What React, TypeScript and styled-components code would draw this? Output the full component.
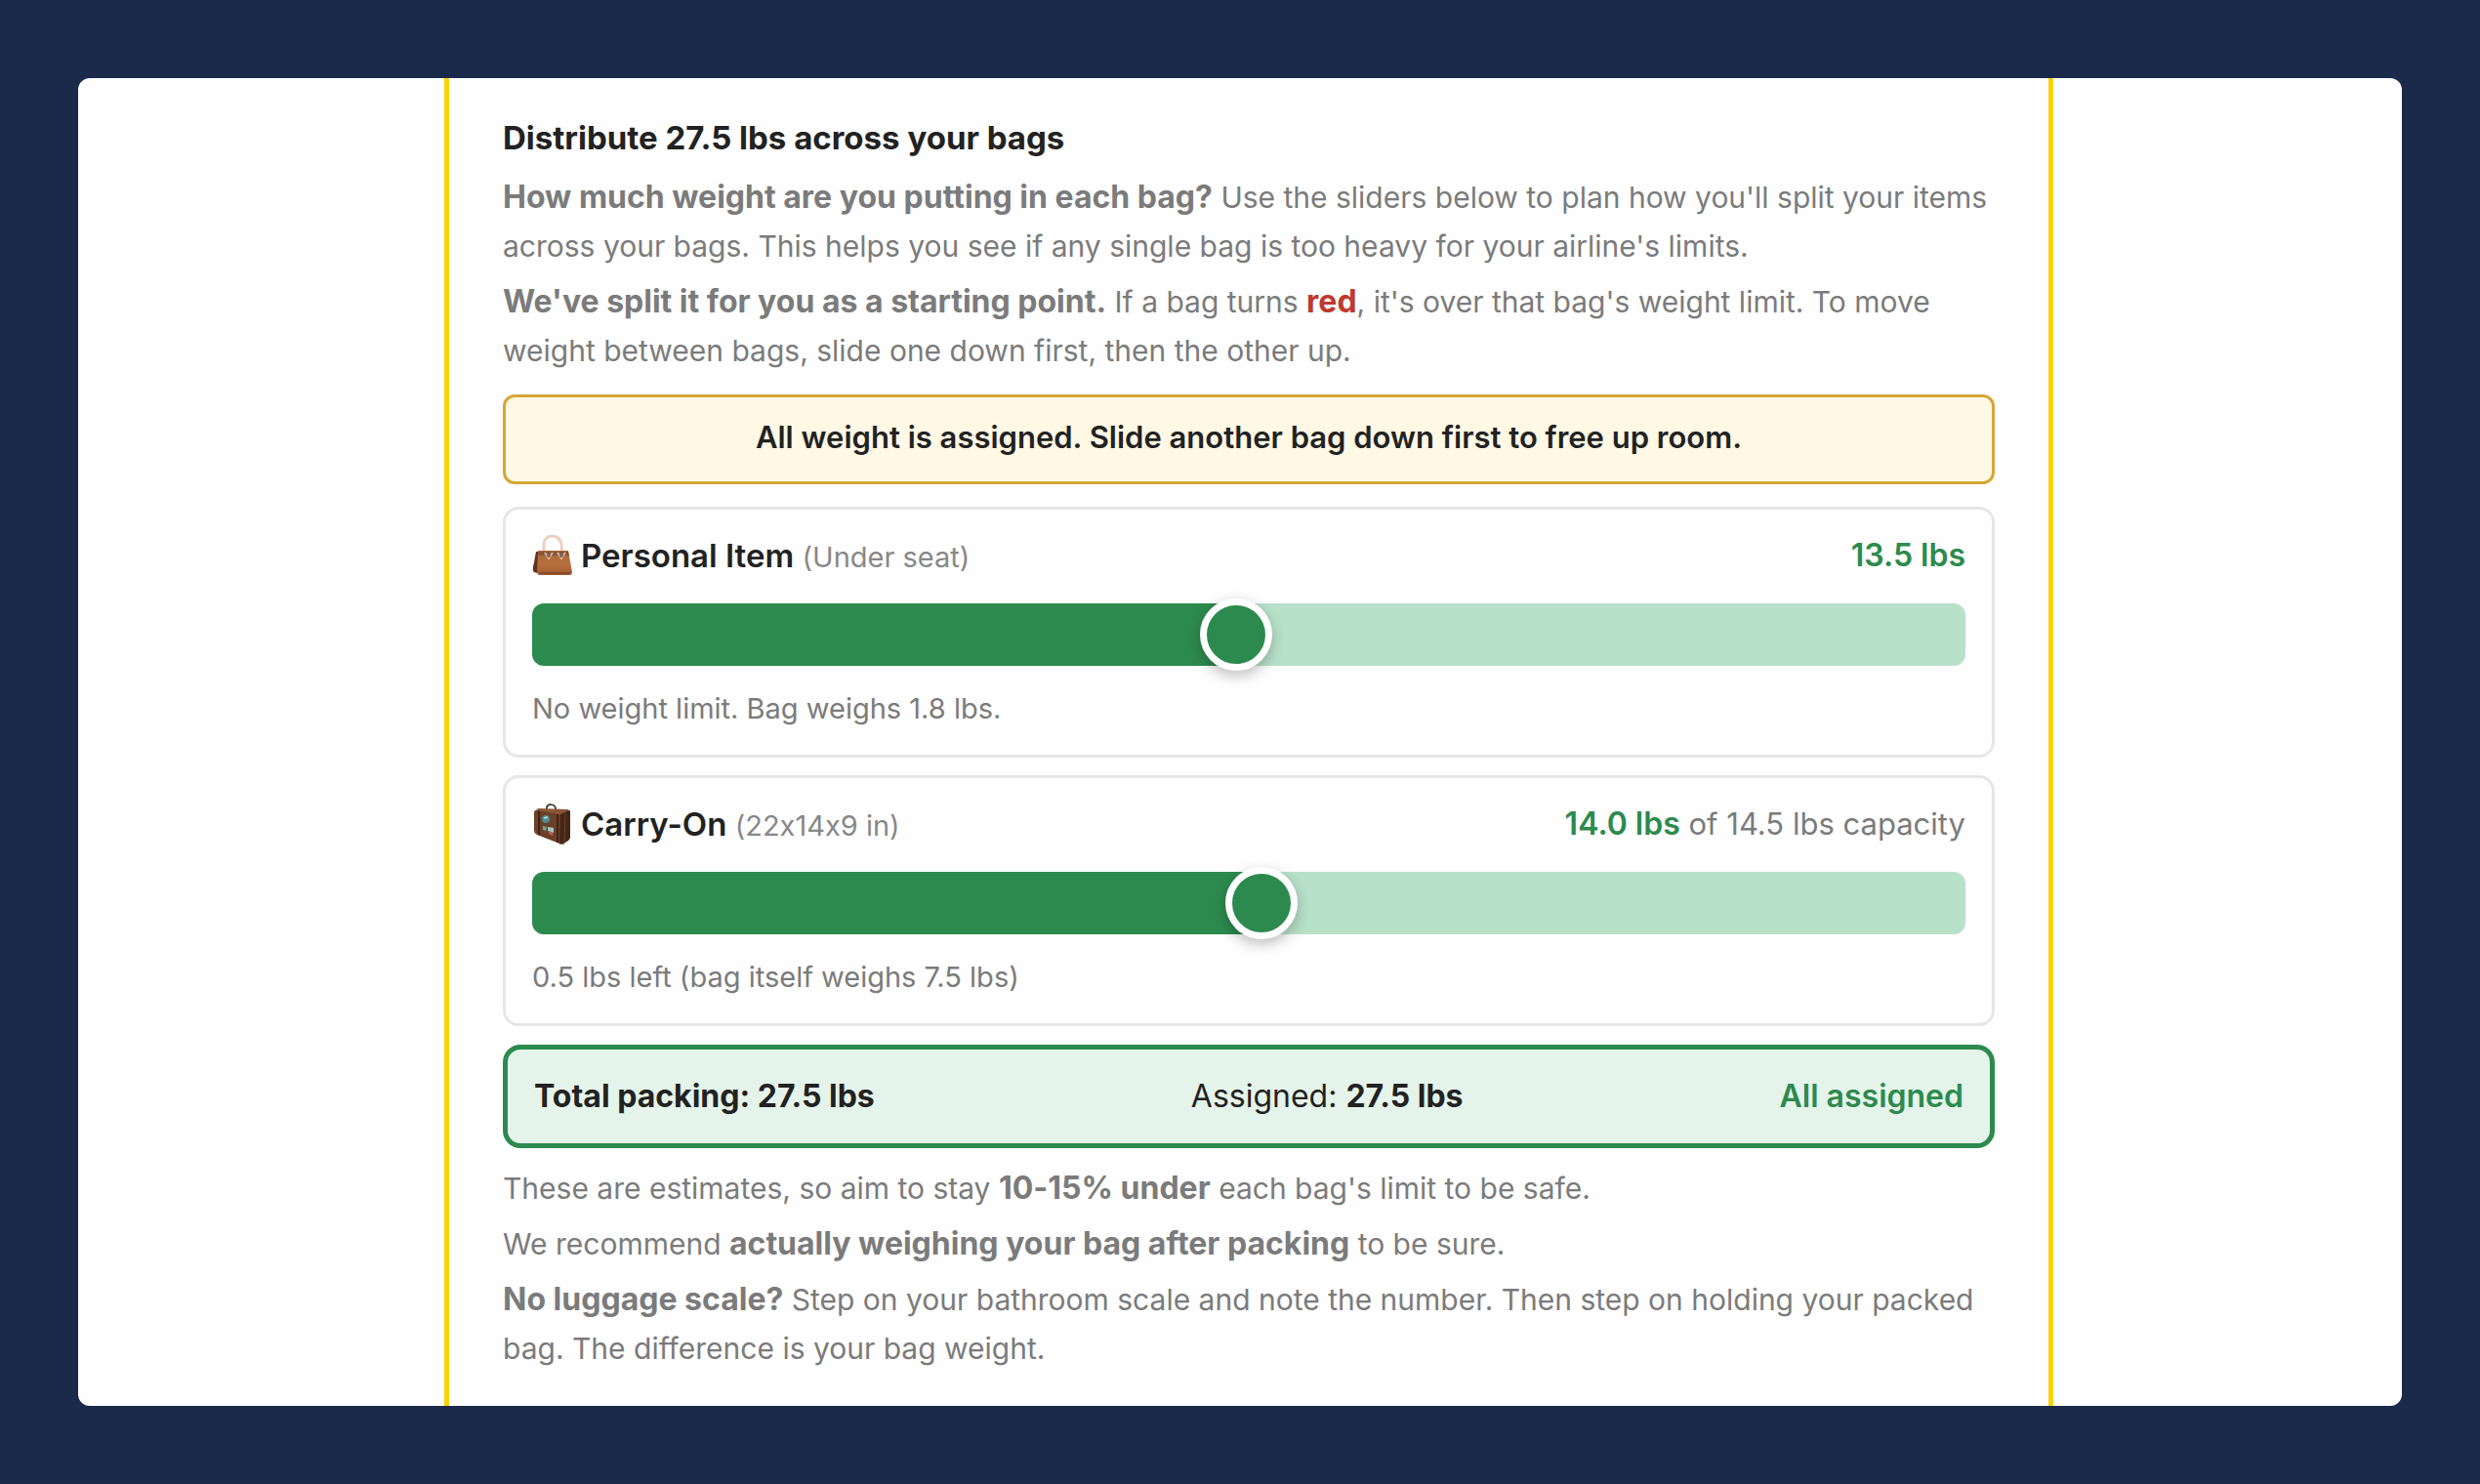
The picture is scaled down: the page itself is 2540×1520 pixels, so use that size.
import React, { useId, useState } from "react";
import styled, { createGlobalStyle } from "styled-components";

const GlobalStyle = createGlobalStyle`
  *, *::before, *::after { box-sizing: border-box; }
  body {
    margin: 0;
    background: #1b2a4a;
    color: #222;
    font-family: Inter, "Liberation Sans", sans-serif;
    font-feature-settings: "calt" 0;
  }
  h2, h3, p { margin: 0; }
`;

const Page = styled.div`
  display: flex;
  min-height: 100vh;
  padding: 80px;
`;

const Sheet = styled.main`
  display: flex;
  flex: 1;
  justify-content: center;
  padding-left: 18px;
  background: #fefefe;
  border-radius: 12px;
  overflow: hidden;
`;

const Column = styled.section`
  width: 100%;
  max-width: 1648px;
  padding: 36px 55px 0;
  border: solid #f9d108;
  border-width: 0 5px;
`;

const Heading = styled.h2`
  margin-bottom: 11px;
  font-size: 33px;
  font-weight: 700;
  line-height: 50px;
`;

const Copy = styled.div`
  display: grid;
  gap: 7px;
  color: #7b7b7b;
  font-size: 30px;
  line-height: 50px;
`;

const Strong = styled.strong`
  font-size: 32px;
  font-weight: 700;
  line-height: 1;
`;

const Red = styled(Strong)`
  color: #c0392b;
`;

const Notice = styled.p`
  margin: 20px 0 23px;
  padding: 16px 24px 20px;
  border: 3px solid #d6a737;
  border-radius: 12px;
  background: #fff8e5;
  font-size: 31px;
  font-weight: 600;
  line-height: 50px;
  text-align: center;
`;

const BagList = styled.div`
  display: grid;
  gap: 18px;
`;

const BagCard = styled.article`
  padding: 26px 27px 25px;
  border: 3px solid #e6e6e6;
  border-radius: 16px;
`;

const BagHeader = styled.div`
  display: flex;
  align-items: center;
  justify-content: space-between;
  margin-bottom: 28px;
  line-height: 42px;
`;

const BagTitle = styled.label`
  display: flex;
  align-items: center;
  gap: 8px;
  font-size: 33px;
  font-weight: 600;
`;

const BagSize = styled.span`
  color: #888;
  font-size: 29px;
  font-weight: 400;
  line-height: 1;
`;

const BagIcon = styled.svg`
  width: 42px;
  height: 42px;
`;

const BagValue = styled.output`
  color: #7b7b7b;
  font-size: 31px;
`;

const Green = styled.strong`
  color: #2d8a4e;
  font-size: 32px;
  font-weight: 600;
`;

const Slider = styled.input`
  display: block;
  width: 100%;
  height: 64px;
  margin: 0;
  appearance: none;
  background: transparent;
  cursor: pointer;

  &::-webkit-slider-runnable-track {
    height: 64px;
    border-radius: 12px;
    background: linear-gradient(
      to right,
      #2d8a4e var(--fill),
      #b8e1c9 var(--fill)
    );
  }

  &::-webkit-slider-thumb {
    width: 74px;
    height: 74px;
    margin-top: -5px;
    appearance: none;
    border: 7px solid #fff;
    border-radius: 50%;
    background: #2d8a4e;
    box-shadow: 0 5px 14px rgba(0, 0, 0, 0.25);
  }
`;

const BagNote = styled.p`
  margin-top: 22px;
  color: #7b7b7b;
  font-size: 29px;
  line-height: 44px;
`;

const Summary = styled.div`
  display: flex;
  justify-content: space-between;
  margin: 19px 0 16px;
  padding: 23px 27px;
  border: 5px solid #2d8a4e;
  border-radius: 18px;
  background: #e5f4ea;
  font-size: 32px;
  line-height: 50px;
`;

const Bold = styled.strong`
  font-weight: 700;
`;

function HandbagIcon() {
  return (
    <BagIcon viewBox="0 0 42 42" aria-hidden="true">
      <defs>
        <linearGradient id="handbag" x1="0" y1="0" x2="0" y2="1">
          <stop offset="0" stopColor="#a9673c" />
          <stop offset="0.6" stopColor="#b86f3f" />
          <stop offset="1" stopColor="#a05a30" />
        </linearGradient>
      </defs>
      <path d="M12 20V10c0-12 17-12 18 0l1 10" fill="none" stroke="#ecd0c0" strokeWidth="3" />
      <path d="M4 17h5v23l-7-2c-2-1-1-6 0-10Z" fill="#5a3421" />
      <path d="M6 16h31l4 22c0 2-1 3-3 3H8c-2 0-3-1-3-3Z" fill="url(#handbag)" />
      <path d="M6 17h31l1 4H7Z" fill="#8b5434" />
      <path d="m13 18 4 6 4-6m5 0 4 6 4-6" fill="none" stroke="#dcb8a0" strokeWidth="2" />
      <circle cx="17" cy="21" r="2" fill="#80665c" />
      <circle cx="30" cy="21" r="2" fill="#80665c" />
      <path d="M8 39h31" stroke="#8b4c28" strokeWidth="2" />
    </BagIcon>
  );
}

function SuitcaseIcon() {
  return (
    <BagIcon viewBox="0 0 42 42" aria-hidden="true">
      <path d="M15 7V4c1-4 8-4 9 1v4" fill="none" stroke="#55483f" strokeWidth="2" />
      <path d="m3 8 3-3 31 1 2 3-8 5Z" fill="#8a5738" />
      <path d="M2 9c0-2 2-2 3-2l23 4c2 0 3 1 3 3v26c0 2-1 2-3 1L5 32c-2-1-3-2-3-4Z" fill="#6b4028" />
      <path d="m29 11 9-4c1 0 1 1 1 2v25c0 2-1 3-2 4l-6 4h-3Z" fill="#432617" />
      <path d="M7 8v24M26 11v29" stroke="#3d2316" strokeWidth="2" />
      <path d="m34 10-1 30" stroke="#6b412a" strokeWidth="1" />
      <circle cx="14" cy="16" r="4" fill="#4c8b91" />
      <path d="m12 15 4-1" stroke="#a9d1cb" strokeWidth="2" />
      <path d="m11 23 4 1-1 4-3-1Z" fill="#6caa82" />
      <path d="m16 24 6 1v5l-6-2Z" fill="#a9c2c2" />
      <path d="m17 28 4 2v3l-4-2Z" fill="#c35d50" />
      <path d="M3 28v2l3 2M28 41l3 1 2-1" fill="none" stroke="#a77b58" strokeWidth="1" />
    </BagIcon>
  );
}

const TOTAL = 27.5;

interface BagProps {
  icon: React.ReactNode;
  name: string;
  size: string;
  value: number;
  room: number;
  capacity?: number;
  note: string;
  onChange: (value: number) => void;
}

function Bag({ icon, name, size, value, room, capacity, note, onChange }: BagProps) {
  const id = useId();
  const limit = Math.min(room, capacity ?? TOTAL);
  const fill = { "--fill": `${(value / TOTAL) * 100}%` } as React.CSSProperties;
  return (
    <BagCard>
      <BagHeader>
        <BagTitle htmlFor={id}>
          {icon}
          <span>
            {name} <BagSize>{size}</BagSize>
          </span>
        </BagTitle>
        <BagValue htmlFor={id}>
          <Green>{value.toFixed(1)} lbs</Green>
          {capacity !== undefined && ` of ${capacity} lbs capacity`}
        </BagValue>
      </BagHeader>
      <Slider
        id={id}
        type="range"
        min={0}
        max={TOTAL}
        step={0.5}
        value={value}
        style={fill}
        onChange={(event) => onChange(Math.min(Number(event.target.value), limit))}
      />
      <BagNote>{note}</BagNote>
    </BagCard>
  );
}

export default function App() {
  const [personal, setPersonal] = useState(13.5);
  const [carryOn, setCarryOn] = useState(14);
  const assigned = personal + carryOn;
  const left = TOTAL - assigned;

  return (
    <>
      <GlobalStyle />
      <Page>
        <Sheet>
          <Column>
            <Heading>Distribute 27.5 lbs across your bags</Heading>
            <Copy>
              <p>
                <Strong>How much weight are you putting in each bag?</Strong> Use the sliders below
                to plan how you'll split your items across your bags. This helps you see if any
                single bag is too heavy for your airline's limits.
              </p>
              <p>
                <Strong>We've split it for you as a starting point.</Strong> If a bag turns{" "}
                <Red>red</Red>, it's over that bag's weight limit. To move weight between bags,
                slide one down first, then the other up.
              </p>
            </Copy>
            <Notice>All weight is assigned. Slide another bag down first to free up room.</Notice>
            <BagList>
              <Bag
                icon={<HandbagIcon />}
                name="Personal Item"
                size="(Under seat)"
                value={personal}
                room={TOTAL - carryOn}
                note="No weight limit. Bag weighs 1.8 lbs."
                onChange={setPersonal}
              />
              <Bag
                icon={<SuitcaseIcon />}
                name="Carry-On"
                size="(22x14x9 in)"
                value={carryOn}
                room={TOTAL - personal}
                capacity={14.5}
                note={`${(14.5 - carryOn).toFixed(1)} lbs left (bag itself weighs 7.5 lbs)`}
                onChange={setCarryOn}
              />
            </BagList>
            <Summary>
              <Bold>Total packing: {TOTAL} lbs</Bold>
              <span>
                Assigned: <Bold>{assigned.toFixed(1)} lbs</Bold>
              </span>
              <Green>{left > 0 ? `${left.toFixed(1)} lbs left` : "All assigned"}</Green>
            </Summary>
            <Copy>
              <p>
                These are estimates, so aim to stay <Strong>10-15% under</Strong> each bag's limit
                to be safe.
              </p>
              <p>
                We recommend <Strong>actually weighing your bag after packing</Strong> to be sure.
              </p>
              <p>
                <Strong>No luggage scale?</Strong> Step on your bathroom scale and note the number.
                Then step on holding your packed bag. The difference is your bag weight.
              </p>
            </Copy>
          </Column>
        </Sheet>
      </Page>
    </>
  );
}
